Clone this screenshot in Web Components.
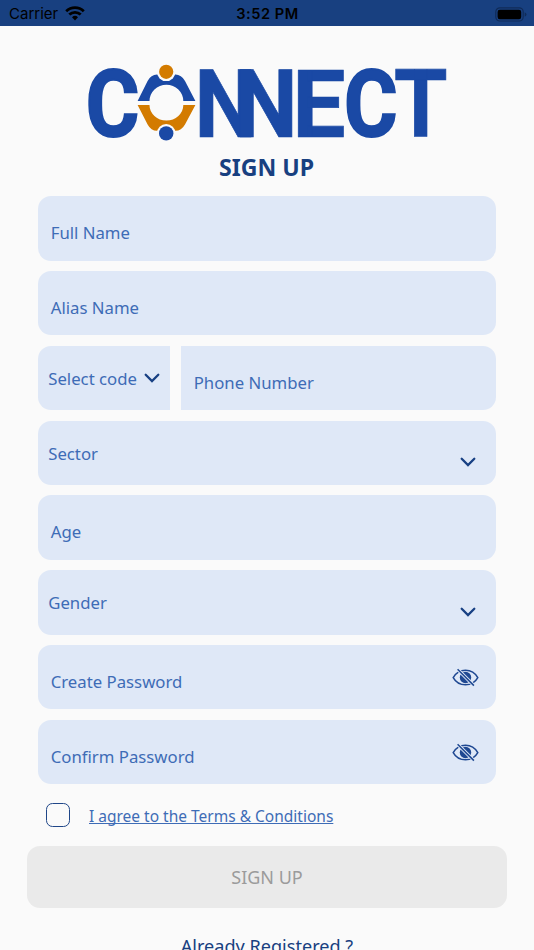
<!DOCTYPE html>
<html lang="en">
<head>
<meta charset="utf-8">
<title>Sign Up</title>
<style>
    html, body {
        margin: 0;
        height: 950px;
        overflow: hidden;
        background: #fafafa;
    }
    body {
        --navy: #184080;
        --label: #3e6cb6;
        --field: #dfe8f7;
        font-family: "Noto Sans", sans-serif;
        color: var(--label);
    }
</style>
</head>
<body>
<sign-up-screen></sign-up-screen>

<script>
    class StatusBar extends HTMLElement {
        connectedCallback() {
            this.attachShadow({ mode: 'open' }).innerHTML = `
            <style>
                :host {
                    display: grid;
                    grid-template-columns: 1fr auto 1fr;
                    align-items: center;
                    height: 26px;
                    box-sizing: border-box;
                    padding: 2px 7px 0 9px;
                    background: var(--navy);
                    color: #000;
                    font: 15px/20px Inter, sans-serif;
                }
                .left { display: flex; align-items: center; gap: 7px; letter-spacing: 0; }
                .time { font-weight: 600; font-size: 14.6px; letter-spacing: 0.55px; margin-right: 1px; }
                .battery { justify-self: end; }
                .wifi { margin-top: -2px; }
                svg { display: block; }
            </style>
            <div class="left">
                <span>Carrier</span>
                <svg class="wifi" width="20" height="15" viewBox="0 0 20 15" fill="none" stroke="#000" stroke-width="2.8">
                    <path d="M1.2 5.2a12.6 12.6 0 0 1 17.6 0"/>
                    <path d="M4.3 8.6a8.2 8.2 0 0 1 11.4 0"/>
                    <path d="M10 14.4l-3-3.1a4.3 4.3 0 0 1 6 0z" fill="#000" stroke="none"/>
                </svg>
            </div>
            <span class="time">3:52 PM</span>
            <svg class="battery" width="32" height="15" viewBox="0 0 32 15">
                <rect x="0.8" y="0.8" width="27.4" height="13.2" rx="4" fill="none" stroke="#102b58" stroke-width="1.2"/>
                <rect x="2.6" y="2.7" width="23.6" height="9.5" rx="2.2"/>
                <path d="M29.7 5.2q1.8 .7 1.8 2.3t-1.8 2.3z" fill="#102b58"/>
            </svg>`;
        }
    }
    window.customElements.define('status-bar', StatusBar);

    class ConnectLogo extends HTMLElement {
        connectedCallback() {
            this.attachShadow({ mode: 'open' }).innerHTML = `
            <style>
                :host { display: block; width: 360px; height: 78px; }
                svg { display: block; overflow: visible; }
                text { font: bold 94.6px Roboto, sans-serif; stroke: #1a49a5; stroke-width: .7; }
                .round { font-size: 93px; stroke-width: 1.9; }
            </style>
            <svg width="360" height="78" viewBox="87 64 360 78" fill="#1a49a5">
                <text class="round" transform="translate(85.7 136.4) scale(.88 1)">C</text>
                <text transform="translate(194.5 137) scale(.93 1)">N</text>
                <text transform="translate(234.5 137) scale(.945 1)">N</text>
                <text transform="translate(292.2 137)">E</text>
                <text class="round" transform="translate(344 136.4) scale(.88 1)">C</text>
                <text transform="translate(394.1 137) scale(.914 1)">T</text>
                <path d="M137.6 101L147.6 81Q151 74.5 157 74.5H175.4Q181.4 74.5 185 81L195.4 101H183.3A16.9 16.3 0 0 0 149.5 101Z"/>
                <path d="M137.6 105L147.6 124.5Q151 130.8 157 130.8H175.4Q181.4 130.8 185 124.5L195.4 105H183.3A16.9 15.4 0 0 1 149.5 105Z" fill="#d37b00"/>
                <circle cx="166.2" cy="71.8" r="9.3" fill="#fafafa"/>
                <circle cx="166.2" cy="71.8" r="7.1" fill="#d37b00"/>
                <circle cx="166.2" cy="133.4" r="9.3" fill="#fafafa"/>
                <circle cx="166.2" cy="133.4" r="7.2"/>
            </svg>`;
        }
    }
    window.customElements.define('connect-logo', ConnectLogo);

    class FormField extends HTMLElement {
        connectedCallback() {
            this.attachShadow({ mode: 'open' }).innerHTML = `
            <style>
                :host {
                    display: flex;
                    align-items: center;
                    justify-content: space-between;
                    box-sizing: border-box;
                    height: 64.3px;
                    padding: 0 17px 0 13px;
                    border-radius: 13px;
                    background: var(--field);
                    font-size: 16.75px;
                    line-height: 24px;
                    white-space: nowrap;
                }
                .label { padding-top: 9.5px; }
                :host([kind="select"]) { padding: 0 20px 0 10.5px; }
                :host([kind="select"]) .label { padding-top: 2px; }
            </style>
            <span class="label"><slot></slot></span>
            <slot name="icon"></slot>`;
        }
    }
    window.customElements.define('form-field', FormField);

    class ChevronIcon extends HTMLElement {
        connectedCallback() {
            this.attachShadow({ mode: 'open' }).innerHTML = `
            <style>
                :host { display: block; margin-top: 19px; }
                svg { display: block; }
            </style>
            <svg width="16" height="10" viewBox="0 0 16 10" fill="none" stroke="#184083" stroke-width="2.3" stroke-linecap="round">
                <path d="M1.7 1.7L8 8.1l6.3-6.4"/>
            </svg>`;
        }
    }
    window.customElements.define('chevron-icon', ChevronIcon);

    class EyeIcon extends HTMLElement {
        connectedCallback() {
            this.attachShadow({ mode: 'open' }).innerHTML = `
            <style>
                :host { display: block; margin-top: 1px; }
                svg { display: block; }
            </style>
            <svg width="27" height="19" viewBox="0 0 27 19" fill="none" stroke="#1f4892">
                <path d="M1.2 9.6C4 4.6 8.4 2.2 13.5 2.2S23 4.6 25.8 9.6C23 14.6 18.6 16.8 13.5 16.8S4 14.6 1.2 9.6z" stroke-width="1.5"/>
                <circle cx="13.5" cy="9.5" r="5.7" fill="#1f4892" stroke="none"/>
                <path d="M5.8 1.5L21.8 17.5" stroke="#dfe8f7" stroke-width="3.2"/>
                <path d="M5.6 1.3L21.9 17.6" stroke-width="1.5"/>
            </svg>`;
        }
    }
    window.customElements.define('eye-icon', EyeIcon);

    class CheckRow extends HTMLElement {
        connectedCallback() {
            this.attachShadow({ mode: 'open' }).innerHTML = `
            <style>
                :host { display: flex; align-items: center; gap: 19px; height: 24px; }
                .box {
                    box-sizing: border-box;
                    width: 24px;
                    height: 24px;
                    border: 1.5px solid #1f4688;
                    border-radius: 6.5px;
                }
                .text {
                    padding-top: 2px;
                    font-size: 15.5px;
                    line-height: 22px;
                    text-decoration: underline;
                    text-decoration-thickness: 1px;
                    text-underline-offset: 1px;
                    text-decoration-skip-ink: none;
                }
            </style>
            <span class="box"></span>
            <span class="text"><slot></slot></span>`;
        }
    }
    window.customElements.define('check-row', CheckRow);

    class SubmitButton extends HTMLElement {
        connectedCallback() {
            this.attachShadow({ mode: 'open' }).innerHTML = `
            <style>
                :host {
                    display: flex;
                    align-items: center;
                    justify-content: center;
                    height: 62px;
                    border-radius: 13px;
                    background: #eaeaea;
                    color: #9b9b9b;
                    font-size: 18px;
                }
            </style>
            <slot></slot>`;
        }
    }
    window.customElements.define('submit-button', SubmitButton);

    class SignUpScreen extends HTMLElement {
        connectedCallback() {
            this.attachShadow({ mode: 'open' }).innerHTML = `
            <style>
                :host { display: block; width: 534px; height: 950px; overflow: hidden; }
                connect-logo { margin: 38px 0 0 87px; }
                h1 {
                    margin: 9px 1px 12.3px 0;
                    color: var(--navy);
                    font-size: 23.1px;
                    font-weight: 700;
                    line-height: 33px;
                    text-align: center;
                }
                .form {
                    display: flex;
                    flex-direction: column;
                    gap: 10.5px;
                    margin: 0 37.7px;
                }
                .phone { display: grid; grid-template-columns: 132.7px 1fr; gap: 10.3px; }
                .code { border-radius: 13px 0 0 13px; padding-right: 10px; }
                .code chevron-icon { margin-top: 0; }
                .number { border-radius: 0 13px 13px 0; }
                check-row { margin: 18.7px 0 0 46px; }
                submit-button { margin: 19.6px 27px 0; }
                .already {
                    margin: 24px 0 0;
                    color: var(--navy);
                    font-size: 18.1px;
                    line-height: 28px;
                    text-align: center;
                }
            </style>
            <status-bar></status-bar>
            <connect-logo></connect-logo>
            <h1>SIGN UP</h1>
            <div class="form">
                <form-field>Full Name</form-field>
                <form-field>Alias Name</form-field>
                <div class="phone">
                    <form-field class="code" kind="select">Select code<chevron-icon slot="icon"></chevron-icon></form-field>
                    <form-field class="number">Phone Number</form-field>
                </div>
                <form-field kind="select">Sector<chevron-icon slot="icon"></chevron-icon></form-field>
                <form-field>Age</form-field>
                <form-field kind="select">Gender<chevron-icon slot="icon"></chevron-icon></form-field>
                <form-field>Create Password<eye-icon slot="icon"></eye-icon></form-field>
                <form-field>Confirm Password<eye-icon slot="icon"></eye-icon></form-field>
            </div>
            <check-row>I agree to the Terms &amp; Conditions</check-row>
            <submit-button>SIGN UP</submit-button>
            <p class="already">Already Registered ?</p>`;
        }
    }
    window.customElements.define('sign-up-screen', SignUpScreen);
</script>
</body>
</html>
